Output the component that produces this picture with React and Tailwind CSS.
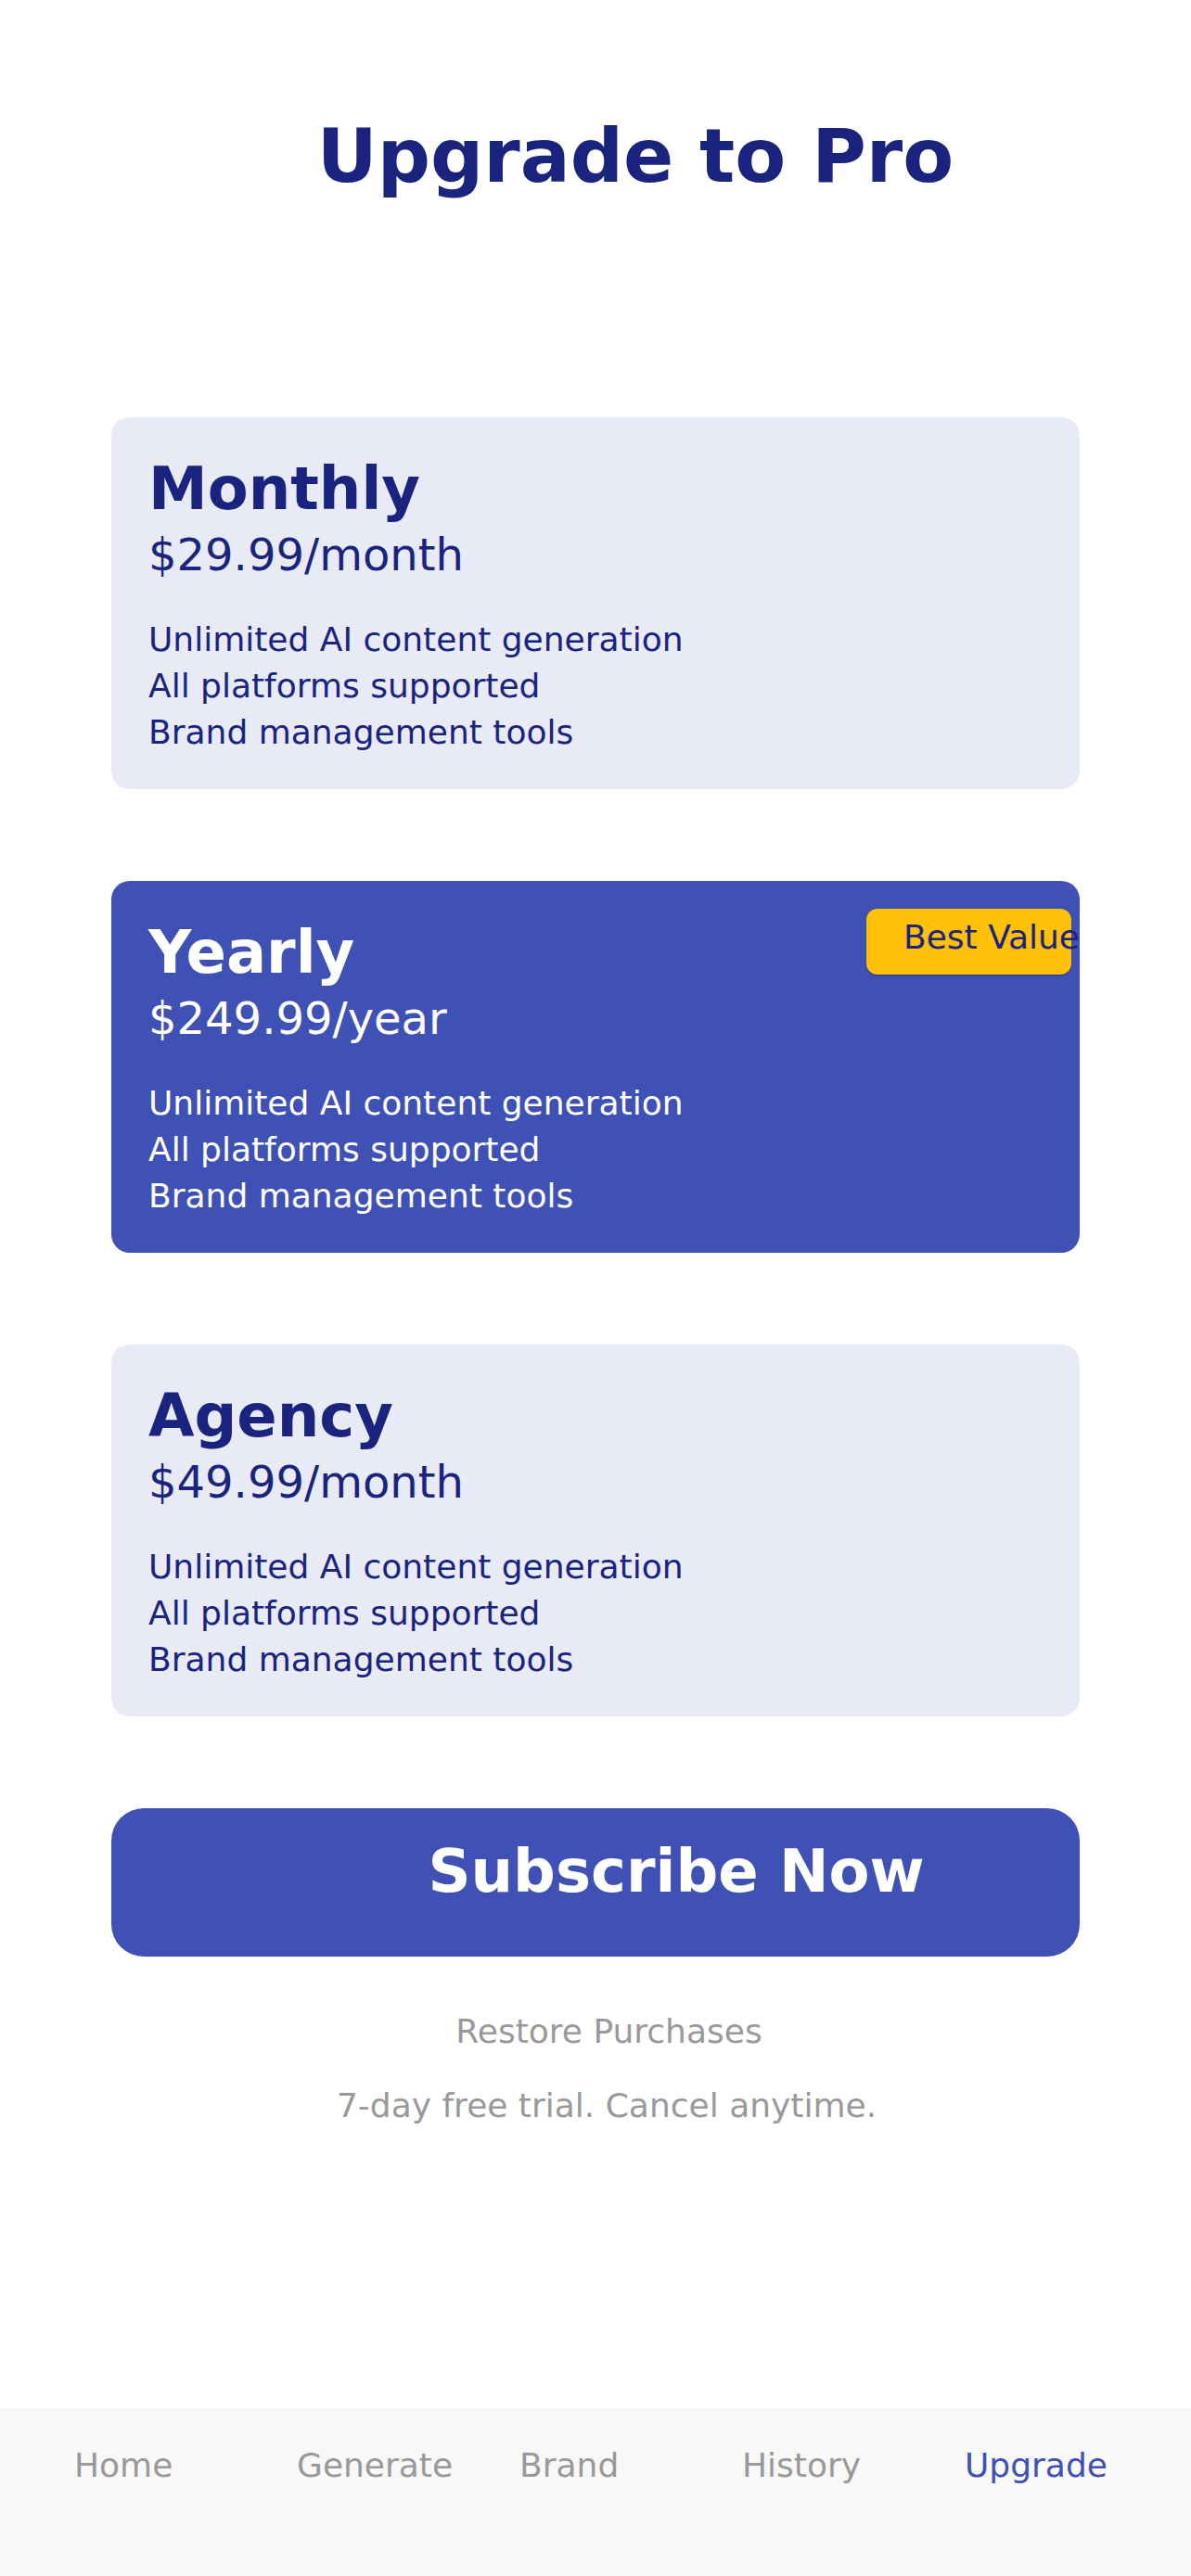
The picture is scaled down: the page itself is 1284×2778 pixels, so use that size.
import React from "react";

const features = [
  "Unlimited AI content generation",
  "All platforms supported",
  "Brand management tools",
];

function PlanCard({ name, price, highlighted, badge }) {
  const text = highlighted ? "text-white" : "text-[#1a237e]";
  return (
    <div
      className={`relative overflow-hidden rounded-[20px] px-[40px] pt-[40px] pb-[40px] ${
        highlighted ? "bg-[#3f51b5]" : "bg-[#e8eaf6]"
      }`}
    >
      {badge && (
        <div className="absolute top-[30px] right-[9px] w-[221px] h-[71px] rounded-[12px] bg-[#ffc107] pl-[40px] pt-[10px] shadow-[0_1px_2px_rgba(0,0,0,0.35)]">
          <span className="block whitespace-nowrap text-[36px] leading-[42px] text-[#1a237e]">
            {badge}
          </span>
        </div>
      )}
      <div className={`text-[64px] leading-[75px] font-bold ${text}`}>{name}</div>
      <div className={`mt-[5px] text-[48px] leading-[56px] ${text}`}>{price}</div>
      <div className="mt-[43px] flex flex-col gap-[8px]">
        {features.map((f) => (
          <div key={f} className={`text-[36px] leading-[42px] ${text}`}>
            {f}
          </div>
        ))}
      </div>
    </div>
  );
}

export default function App() {
  const tabs = ["Home", "Generate", "Brand", "History", "Upgrade"];
  return (
    <div
      className="flex flex-col h-[2778px] w-full bg-white"
      style={{ fontFamily: '"DejaVu Sans", "Noto Sans", sans-serif' }}
    >
      <h1 className="mt-[122px] pl-[86px] text-center text-[80px] leading-[93px] font-bold text-[#1a237e]">
        Upgrade to Pro
      </h1>

      <div className="mt-[235px] px-[120px] flex flex-col gap-[99px]">
        <PlanCard name="Monthly" price="$29.99/month" />
        <PlanCard name="Yearly" price="$249.99/year" highlighted badge="Best Value" />
        <PlanCard name="Agency" price="$49.99/month" />
      </div>

      <div className="px-[120px] mt-[99px]">
        <button className="flex w-full h-[160px] items-start justify-center rounded-[35px] bg-[#3f51b5] pt-[31px] pl-[174px]">
          <span className="text-[64px] leading-[75px] font-bold text-white whitespace-nowrap">
            Subscribe Now
          </span>
        </button>
      </div>

      <div className="mt-[60px] pl-[29px] text-center text-[36px] leading-[42px] text-[#999999]">
        Restore Purchases
      </div>
      <div className="mt-[38px] pl-[24px] text-center text-[36px] leading-[42px] text-[#999999]">
        7-day free trial. Cancel anytime.
      </div>

      <div className="flex-1" />

      <nav className="h-[181px] bg-[#f8f8f8] pt-[41px] pl-[80px] grid grid-cols-[240px_240px_240px_240px_240px] content-start">
        {tabs.map((t) => (
          <div
            key={t}
            className={`text-[36px] leading-[42px] ${
              t === "Upgrade" ? "text-[#3f51b5]" : "text-[#999999]"
            }`}
          >
            {t}
          </div>
        ))}
      </nav>
    </div>
  );
}
